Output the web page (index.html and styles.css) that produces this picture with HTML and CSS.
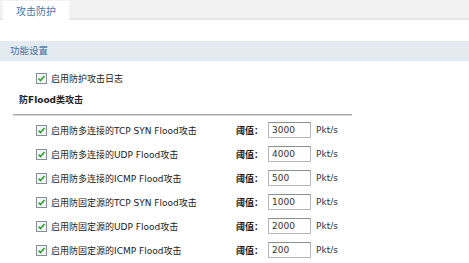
FILE: index.html
```html
<!DOCTYPE html>
<html lang="zh-CN">
<head>
<meta charset="UTF-8" />
<title>攻击防护</title>
<link rel="stylesheet" href="styles.css">
</head>
<body>

<div class="tabbar">
  <div class="tab">攻击防护</div>
</div>

<div class="section-title">功能设置</div>

<div class="log-row">
  <span class="check"><svg viewBox="0 0 11 11"><rect x="0.5" y="0.5" width="10" height="10" fill="#f4f6f8" stroke="#7f8f9c"/><path d="M2.5 5.5 L4.5 7.5 L8.5 3" fill="none" stroke="#2ea12e" stroke-width="1.6"/></svg></span>
  <span>启用防护攻击日志</span>
</div>

<div class="group-title">防Flood类攻击</div>
<div class="divider"></div>

<div class="rows">
  <div class="row">
    <label class="opt"><span class="check"><svg viewBox="0 0 11 11"><rect x="0.5" y="0.5" width="10" height="10" fill="#f4f6f8" stroke="#7f8f9c"/><path d="M2.5 5.5 L4.5 7.5 L8.5 3" fill="none" stroke="#2ea12e" stroke-width="1.6"/></svg></span>启用防多连接的TCP SYN Flood攻击</label>
    <span class="th">阈值：</span><span class="val">3000</span><span class="unit">Pkt/s</span>
  </div>
  <div class="row">
    <label class="opt"><span class="check"><svg viewBox="0 0 11 11"><rect x="0.5" y="0.5" width="10" height="10" fill="#f4f6f8" stroke="#7f8f9c"/><path d="M2.5 5.5 L4.5 7.5 L8.5 3" fill="none" stroke="#2ea12e" stroke-width="1.6"/></svg></span>启用防多连接的UDP Flood攻击</label>
    <span class="th">阈值：</span><span class="val">4000</span><span class="unit">Pkt/s</span>
  </div>
  <div class="row">
    <label class="opt"><span class="check"><svg viewBox="0 0 11 11"><rect x="0.5" y="0.5" width="10" height="10" fill="#f4f6f8" stroke="#7f8f9c"/><path d="M2.5 5.5 L4.5 7.5 L8.5 3" fill="none" stroke="#2ea12e" stroke-width="1.6"/></svg></span>启用防多连接的ICMP Flood攻击</label>
    <span class="th">阈值：</span><span class="val">500</span><span class="unit">Pkt/s</span>
  </div>
  <div class="row">
    <label class="opt"><span class="check"><svg viewBox="0 0 11 11"><rect x="0.5" y="0.5" width="10" height="10" fill="#f4f6f8" stroke="#7f8f9c"/><path d="M2.5 5.5 L4.5 7.5 L8.5 3" fill="none" stroke="#2ea12e" stroke-width="1.6"/></svg></span>启用防固定源的TCP SYN Flood攻击</label>
    <span class="th">阈值：</span><span class="val">1000</span><span class="unit">Pkt/s</span>
  </div>
  <div class="row">
    <label class="opt"><span class="check"><svg viewBox="0 0 11 11"><rect x="0.5" y="0.5" width="10" height="10" fill="#f4f6f8" stroke="#7f8f9c"/><path d="M2.5 5.5 L4.5 7.5 L8.5 3" fill="none" stroke="#2ea12e" stroke-width="1.6"/></svg></span>启用防固定源的UDP Flood攻击</label>
    <span class="th">阈值：</span><span class="val">2000</span><span class="unit">Pkt/s</span>
  </div>
  <div class="row">
    <label class="opt"><span class="check"><svg viewBox="0 0 11 11"><rect x="0.5" y="0.5" width="10" height="10" fill="#f4f6f8" stroke="#7f8f9c"/><path d="M2.5 5.5 L4.5 7.5 L8.5 3" fill="none" stroke="#2ea12e" stroke-width="1.6"/></svg></span>启用防固定源的ICMP Flood攻击</label>
    <span class="th">阈值：</span><span class="val">200</span><span class="unit">Pkt/s</span>
  </div>
</div>

</body>
</html>
```

FILE: styles.css
```css
body {
  margin: 0;
  background: #fff;
  color: #222;
  font-family: "DejaVu Sans", "Noto Sans CJK SC", sans-serif;
  font-size: 9px;
}

.tabbar {
  height: 18px;
  background: #f2f2f2;
  border-bottom: 2px solid #e7e7e7;
  padding-left: 3px;
  display: flex;
  align-items: flex-end;
}
.tab {
  width: 66px;
  height: 19px;
  margin-bottom: -2px;
  background: #fff;
  color: #4a78a6;
  font-size: 10px;
  display: flex;
  align-items: center;
  justify-content: center;
}

.section-title {
  margin-top: 21px;
  height: 20px;
  line-height: 20px;
  padding-left: 10px;
  background: #e3ebf1;
  color: #3f6f9f;
  font-size: 9.5px;
}

.log-row {
  margin-top: 5px;
  height: 24px;
  padding-left: 36px;
  display: flex;
  align-items: center;
}

.check {
  width: 11px;
  height: 11px;
  margin-right: 4px;
  display: inline-flex;
  flex: none;
}
.check svg {
  width: 11px;
  height: 11px;
}

.group-title {
  height: 20px;
  line-height: 20px;
  padding-left: 19px;
  font-weight: bold;
}

.divider {
  margin: 4px 0 2px 13px;
  width: 339px;
  height: 2px;
  background: linear-gradient(#a9a9a9 50%, #d6d6d6 50%);
}

.row {
  height: 24px;
  padding-left: 36px;
  display: flex;
  align-items: center;
}
.opt {
  width: 200px;
  display: flex;
  align-items: center;
}
.th {
  width: 32px;
  font-weight: bold;
}
.val {
  width: 38px;
  height: 14px;
  line-height: 14px;
  padding-left: 3px;
  border: 1px solid #b5b5b5;
  border-top-color: #8f8f8f;
  color: #333;
  margin-right: 5px;
}
.unit {
  color: #333;
}
```
